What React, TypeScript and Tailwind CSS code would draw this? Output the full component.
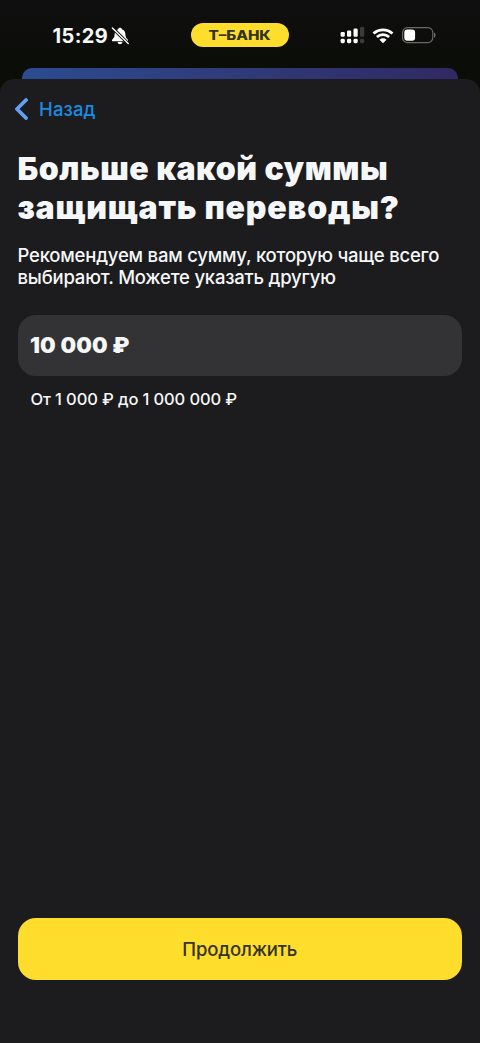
import { useState } from "react";

function BellOffIcon() {
  return (
    <svg width="18" height="18" viewBox="0 0 18 18" fill="none" aria-hidden="true">
      <path
        d="M9 0.8C8 0.8 7.3 1.4 7.2 2.2C4.7 3 3.6 5 3.6 7.3C3.6 10.1 2.8 11.1 1.5 12.2C0.6 13.2 0.9 14.3 2.1 14.3H15.9C17.1 14.3 17.4 13.2 16.5 12.2C15.2 11.1 14.4 10.1 14.4 7.3C14.4 5 13.3 3 10.8 2.2C10.7 1.4 10 0.8 9 0.8Z"
        fill="white"
      />
      <path d="M6.6 15.1H11.4C11.2 16.5 10.2 17.3 9 17.3C7.8 17.3 6.8 16.5 6.6 15.1Z" fill="white" />
      <path d="M1.6 1L17 16.4" stroke="#0b0c09" strokeWidth="3.2" />
      <path d="M1.4 0.9L17.2 16.6" stroke="white" strokeWidth="1.4" strokeLinecap="round" />
    </svg>
  );
}

function SignalIcon() {
  return (
    <svg width="25" height="17" viewBox="0 0 25 17" fill="white" aria-hidden="true">
      <rect x="0.6" y="5" width="4.2" height="4.8" rx="1.2" />
      <rect x="7" y="3.4" width="4.2" height="6.4" rx="1.2" />
      <rect x="13.5" y="1.5" width="4.2" height="8.3" rx="1.2" />
      <rect x="20" y="0" width="4.2" height="9.8" rx="1.2" fill="#3b3c3a" />
      <rect x="0.6" y="11.8" width="4.2" height="4.4" rx="1.4" />
      <rect x="7" y="11.8" width="4.2" height="4.4" rx="1.4" />
      <rect x="13.5" y="11.8" width="4.2" height="4.4" rx="1.4" />
      <rect x="20" y="11.8" width="4.2" height="4.4" rx="1.4" fill="#3b3c3a" />
    </svg>
  );
}

function WifiIcon() {
  return (
    <svg width="22" height="16" viewBox="0 0 22 16" fill="none" aria-hidden="true">
      <path d="M1.5 5.6C6.9 0.5 15.1 0.5 20.5 5.6" stroke="white" strokeWidth="2.8" />
      <path d="M4.9 9.1C8.4 5.9 13.6 5.9 17.1 9.1" stroke="white" strokeWidth="2.7" />
      <path d="M7.5 11.7C9.5 9.9 12.5 9.9 14.5 11.7L11 15.2Z" fill="white" />
    </svg>
  );
}

function BatteryIcon() {
  return (
    <svg width="35" height="17" viewBox="0 0 35 17" fill="none" aria-hidden="true">
      <rect x="0.6" y="0.7" width="30.2" height="14.9" rx="4.8" stroke="#696a68" strokeWidth="1.2" />
      <rect x="2.3" y="2.6" width="10.8" height="11.2" rx="3" fill="white" />
      <path d="M32 5.6C34.2 6.4 34.2 9.9 32 10.7Z" fill="#696a68" />
    </svg>
  );
}

function StatusBar() {
  return (
    <div className="flex h-[68px] shrink-0 items-start bg-linear-to-b from-[#0f0f0f] to-[#0b0d08]">
      <div className="flex w-[191px] items-center pl-[52.5px] pt-[22px]">
        <span className="w-[56px] whitespace-nowrap text-[20px] font-bold leading-[28px] tracking-[0.4px]">
          15:29
        </span>
        <span className="ml-[2.5px]">
          <BellOffIcon />
        </span>
      </div>
      <div className="mt-[23px] flex h-6 w-[98px] items-center justify-center rounded-full bg-[#ffdd2d]">
        <span className="scale-x-[1.22] whitespace-nowrap pt-[2px] text-[12.5px] font-extrabold leading-none text-[#333320]">
          Т–БАНК
        </span>
      </div>
      <div className="ml-[51px] mt-[27px] flex items-center">
        <SignalIcon />
        <span className="ml-[7px]">
          <WifiIcon />
        </span>
        <span className="ml-[8px]">
          <BatteryIcon />
        </span>
      </div>
    </div>
  );
}

export default function App() {
  const [amount, setAmount] = useState("10 000 ₽");

  return (
    <div className="flex h-[1043px] w-[480px] flex-col overflow-hidden bg-[#0b0d09] font-['Inter',sans-serif] text-[#f6f7f8]">
      <StatusBar />

      {/* edge of the sheet underneath */}
      <div className="mx-[22px] h-[11px] shrink-0 rounded-t-[10px] bg-linear-to-r from-[#2b4b91] via-[#303a79] to-[#2f2963]" />

      <main className="flex flex-1 flex-col rounded-t-[14px] bg-[#1c1c1e] pl-[17.5px] pr-[18px]">
        <button type="button" className="-ml-[4px] mt-[17px] flex h-[28px] items-center self-start text-[#1b8be0]">
          <svg className="mb-[2px]" width="15" height="22" viewBox="0 0 15 22" fill="none" aria-hidden="true">
            <path
              d="M12 2L3 11L12 20"
              stroke="#669ff0"
              strokeWidth="3.8"
              strokeLinecap="round"
              strokeLinejoin="round"
            />
          </svg>
          <span className="ml-[10.5px] text-[18.5px] font-medium tracking-[0.1px]">Назад</span>
        </button>

        <h1 className="mt-[25px] whitespace-nowrap text-[32px] font-black leading-[39px]">
          <span className="block tracking-[0.54px]">Больше какой суммы</span>
          <span className="block tracking-[0.82px]">защищать переводы?</span>
        </h1>

        <p className="mt-[17px] whitespace-nowrap text-[18.5px] font-medium leading-[22px] tracking-[-0.21px]">
          Рекомендуем вам сумму, которую чаще всего
          <br />
          выбирают. Можете указать другую
        </p>

        <input
          type="text"
          value={amount}
          onChange={(e) => setAmount(e.target.value)}
          className="mt-[27px] h-[61px] w-full rounded-[18px] bg-[#333335] px-[12.5px] pb-[2px] text-[22px] font-black tracking-[0.15px] outline-none"
        />
        <p className="mt-[12px] whitespace-nowrap pl-[13px] text-[16.5px] font-medium leading-[22px] tracking-[-0.12px]">
          От 1 000 ₽ до 1 000 000 ₽
        </p>

        <button
          type="button"
          className="mb-[63.5px] mt-auto h-[61.5px] w-full rounded-[18px] bg-[#ffdd2d] pt-[2px] text-[18.5px] font-medium tracking-[-0.15px] text-[#333320]"
        >
          Продолжить
        </button>
      </main>
    </div>
  );
}
